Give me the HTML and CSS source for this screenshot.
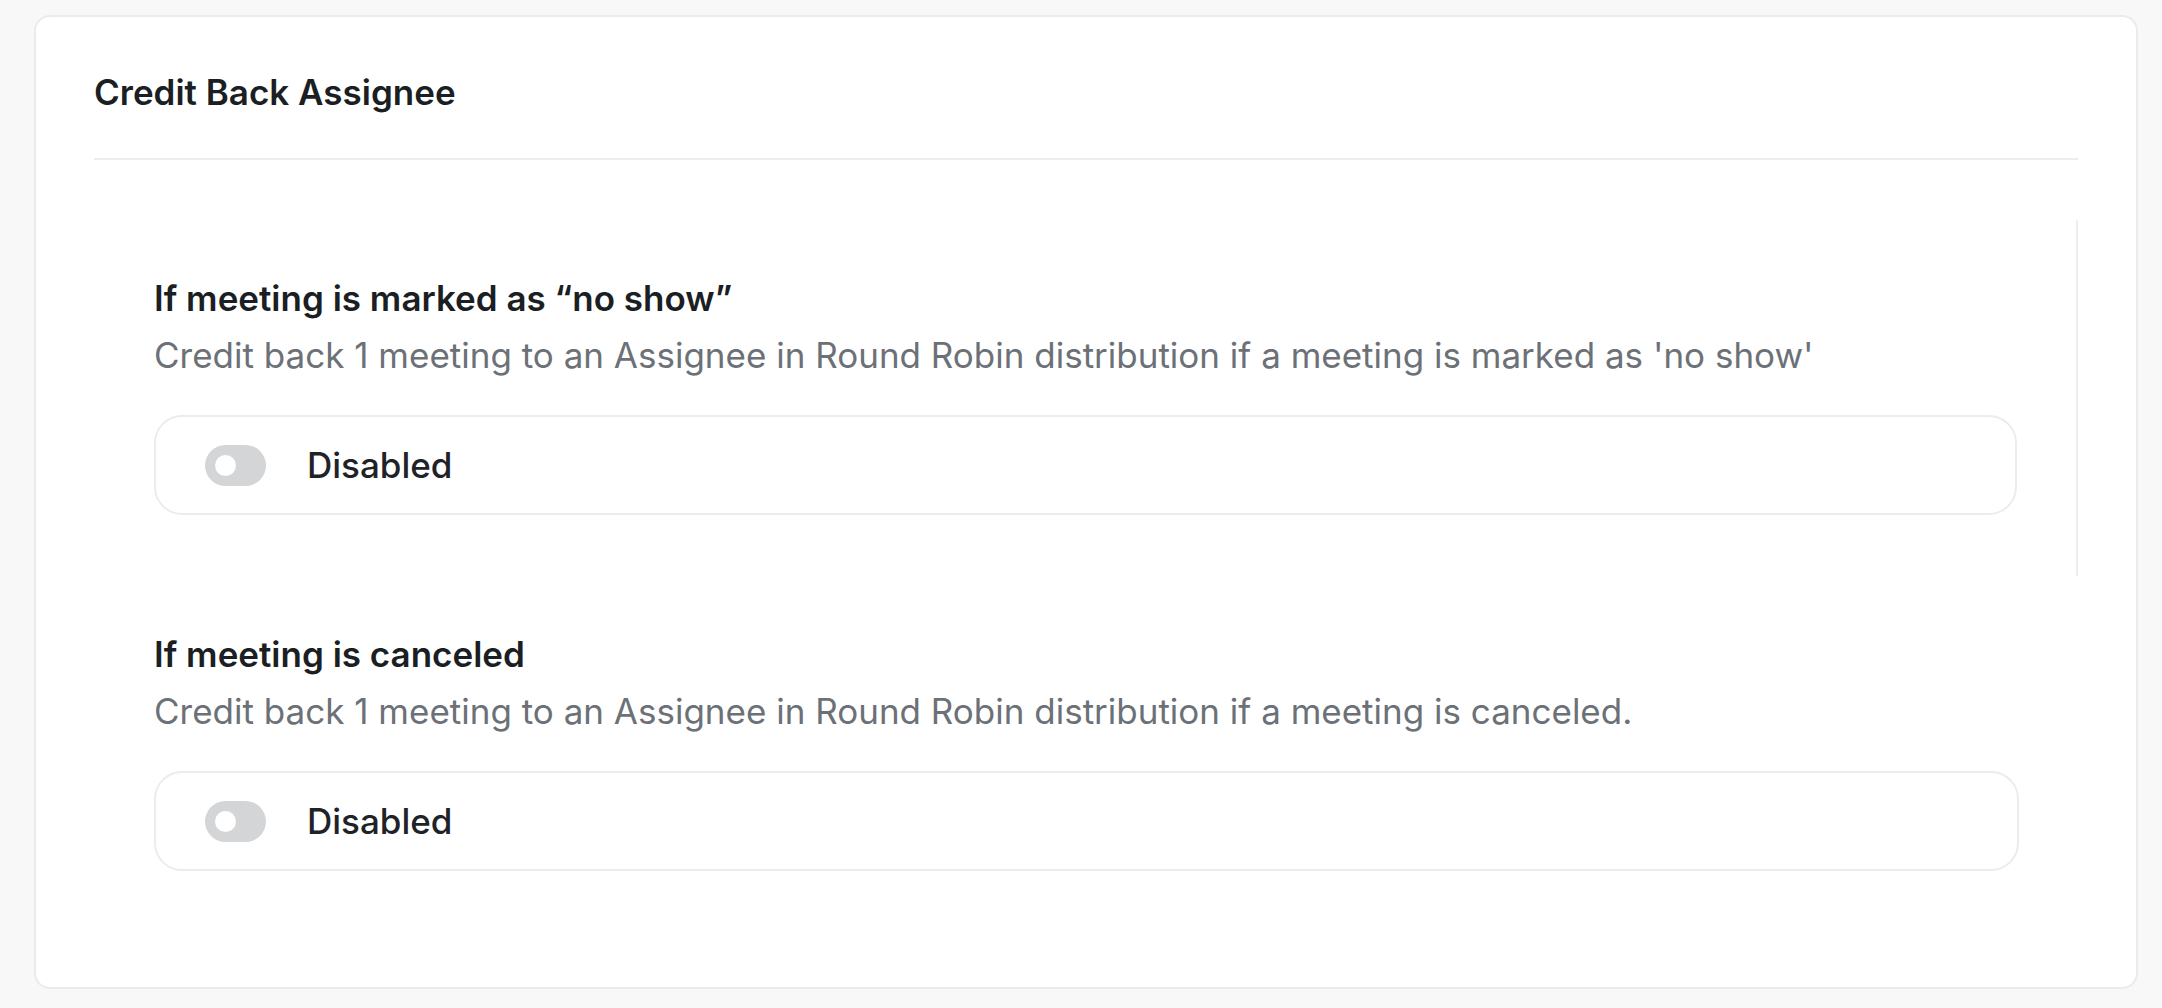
FILE: index.html
```html
<!DOCTYPE html>
<html lang="en">
<head>
<meta charset="utf-8">
<title>Credit Back Assignee</title>
<link rel="stylesheet" href="styles.css">
</head>
<body>
<div class="card">
  <div class="card-header">
    <h2 class="card-title">Credit Back Assignee</h2>
  </div>
  <div class="section section-scroll">
    <h3 class="section-title">If meeting is marked as “no show”</h3>
    <p class="section-desc">Credit back 1 meeting to an Assignee in Round Robin distribution if a meeting is marked as 'no show'</p>
    <div class="toggle-box">
      <span class="toggle"><span class="knob"></span></span>
      <span class="toggle-label">Disabled</span>
    </div>
  </div>
  <div class="section">
    <h3 class="section-title">If meeting is canceled</h3>
    <p class="section-desc">Credit back 1 meeting to an Assignee in Round Robin distribution if a meeting is canceled.</p>
    <div class="toggle-box">
      <span class="toggle"><span class="knob"></span></span>
      <span class="toggle-label">Disabled</span>
    </div>
  </div>
</div>
</body>
</html>
```
FILE: styles.css
```css
* { box-sizing: border-box; }
html, body { margin: 0; padding: 0; }
body {
  background: #f8f8f8;
  font-family: Inter, "Noto Sans", "Liberation Sans", sans-serif;
  color: #1b1f24;
  height: 1008px;
  overflow: hidden;
}
.card {
  margin: 15px 24px 0 34px;
  height: 974px;
  background: #ffffff;
  border: 2px solid #ebebeb;
  border-radius: 16px;
  padding: 0 58px;
}
.card-header {
  padding: 57px 0 48px;
  border-bottom: 2px solid #ededed;
}
.card-title {
  margin: 0;
  font-size: 35px;
  line-height: 36px;
  font-weight: 600;
  color: #1b1f24;
}
.section {
  padding: 58px 59px 61px 60px;
}
.section-scroll {
  margin-top: 60px;
  border-right: 2px solid #ededed;
}
.section-title {
  margin: 0;
  font-size: 35px;
  line-height: 40px;
  font-weight: 600;
  color: #1b1f24;
}
.section-desc {
  margin: 17px 0 0;
  font-size: 35px;
  line-height: 40px;
  font-weight: 400;
  color: #6c7177;
}
.toggle-box {
  margin-top: 40px;
  height: 100px;
  border: 2px solid #ececec;
  border-radius: 28px;
  display: flex;
  align-items: center;
  padding-left: 49px;
  gap: 41px;
}
.toggle {
  width: 61px;
  height: 41px;
  border-radius: 21px;
  background: #d4d5d7;
  display: flex;
  align-items: center;
  padding-left: 10px;
}
.knob {
  width: 21px;
  height: 21px;
  border-radius: 50%;
  background: #ffffff;
}
.toggle-label {
  font-size: 35px;
  line-height: 40px;
  font-weight: 500;
  color: #1f2328;
}
```
